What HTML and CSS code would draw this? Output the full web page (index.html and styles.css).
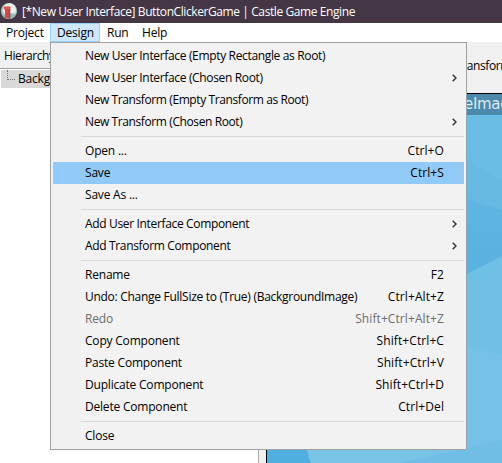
FILE: index.html
```html
<!DOCTYPE html>
<html lang="en">
<head>
<meta charset="utf-8">
<title>Castle Game Engine</title>
<link rel="stylesheet" href="styles.css">
</head>
<body>
<div class="window">
  <header class="titlebar">
    <svg class="logo" viewBox="0 0 16 16">
      <circle cx="8" cy="8" r="8" fill="#9fcfc8"/>
      <circle cx="8.500" cy="6.800" r="6.500" fill="#e6f2ea"/>
      <path d="M1 12Q8 9 15 11Q12 16 8 16Q3 16 1 12Z" fill="#8dbfb4"/>
      <path d="M4 6h5v9.700L4 15z" fill="#d9434d"/>
      <path d="M2.500 4l2-.8 1 .6 1.500-.8 1.300.7 1.200-.4v3.200H3z" fill="#e4544f"/>
      <path d="M8 6h1.300v9.500H8z" fill="#b9364a"/>
    </svg>
    <span class="title">[*New User Interface] ButtonClickerGame | Castle Game Engine</span>
  </header>
  <nav class="menubar">
    <span class="tab project">Project</span><span class="tab design">Design</span><span class="tab run">Run</span><span class="tab help">Help</span>
  </nav>
  <main class="workspace">
    <aside class="hierarchy">
      <div class="heading">Hierarchy</div>
      <div class="tree"><div class="node"><i class="branch"></i><span>Background</span></div></div>
    </aside>
    <div class="splitter"></div>
    <section class="editor">
      <div class="toolbar"><span>Transform</span></div>
      <div class="viewport">
        <svg class="scene" viewBox="267 94 235 369" preserveAspectRatio="none">
          <defs>
            <linearGradient id="sky" x1="0" y1="0" x2="0" y2="1"><stop offset="0" stop-color="#67bbe4"/><stop offset=".45" stop-color="#59b2df"/><stop offset="1" stop-color="#4fafde"/></linearGradient>
          </defs>
          <path d="M267 94H502V463H267z" fill="url(#sky)"/>
          <path d="M467 94H502V180Q482 172 467 159z" fill="#6abde4"/>
          <path d="M467 159Q482 172 502 180V210Q484 206 467 199z" fill="#66b9e2"/>
          <path d="M502 256L467 274V463H502z" fill="#70c0e6"/>
          <path d="M467 346L502 355V463H467z" fill="#75c1e7"/>
          <path d="M307 449Q308 457 311 463H502V449z" fill="#79c3e7"/>
          <path d="M400 463L502 440V463z" fill="#70bee5"/>
        </svg>
        <div class="caption">eImage</div>
      </div>
    </section>
  </main>
  <div class="menu">
    <div class="item tight"><span>New User Interface (Empty Rectangle as Root)</span></div>
    <div class="item tight"><span>New User Interface (Chosen Root)</span><svg class="arrow" viewBox="0 0 5 8"><path d="M.7.7L4 4 .7 7.300"/></svg></div>
    <div class="item tighter"><span>New Transform (Empty Transform as Root)</span></div>
    <div class="item tighter"><span>New Transform (Chosen Root)</span><svg class="arrow" viewBox="0 0 5 8"><path d="M.7.7L4 4 .7 7.300"/></svg></div>
    <div class="separator"></div>
    <div class="item"><span>Open ...</span><kbd>Ctrl+O</kbd></div>
    <div class="item selected"><span>Save</span><kbd>Ctrl+S</kbd></div>
    <div class="item"><span>Save As ...</span></div>
    <div class="separator"></div>
    <div class="item tight"><span>Add User Interface Component</span><svg class="arrow" viewBox="0 0 5 8"><path d="M.7.7L4 4 .7 7.300"/></svg></div>
    <div class="item tight"><span>Add Transform Component</span><svg class="arrow" viewBox="0 0 5 8"><path d="M.7.7L4 4 .7 7.300"/></svg></div>
    <div class="separator"></div>
    <div class="item"><span>Rename</span><kbd>F2</kbd></div>
    <div class="item undo"><span>Undo: Change FullSize to (True) (BackgroundImage)</span><kbd>Ctrl+Alt+Z</kbd></div>
    <div class="item disabled"><span>Redo</span><kbd>Shift+Ctrl+Alt+Z</kbd></div>
    <div class="item"><span>Copy Component</span><kbd>Shift+Ctrl+C</kbd></div>
    <div class="item"><span>Paste Component</span><kbd>Shift+Ctrl+V</kbd></div>
    <div class="item"><span>Duplicate Component</span><kbd>Shift+Ctrl+D</kbd></div>
    <div class="item"><span>Delete Component</span><kbd>Ctrl+Del</kbd></div>
    <div class="separator"></div>
    <div class="item"><span>Close</span></div>
  </div>
</div>
</body>
</html>
```
FILE: styles.css
```css
* { box-sizing: border-box; }
body { margin: 0; font: 12px/16px "Open Sans", "Noto Sans", sans-serif; color: #000; letter-spacing: -0.2px; }
.window { position: relative; width: 502px; height: 463px; overflow: hidden; display: flex; flex-direction: column; background: #fff; white-space: nowrap; }
.titlebar { height: 23px; flex: none; display: flex; align-items: center; background: #443645; color: #fff; padding-left: 1px; }
.title { letter-spacing: -0.41px; padding-top: 1px; }
.logo { width: 16px; height: 16px; margin: 0 5px 1px 0; }
.menubar { height: 19px; flex: none; display: flex; background: #fff; }
.tab { line-height: 19px; padding-left: 6px; }
.project { width: 50px; }
.design { width: 50px; background: #cce8ff; border: 1px solid #99d1ff; line-height: 17px; }
.run { width: 35px; padding-left: 7px; }
.help { padding-left: 7px; }
.workspace { flex: 1; display: flex; min-height: 0; }
.hierarchy { width: 259px; flex: none; border-right: 1px solid #acacac; background: #fff; }
.heading { height: 27px; background: #f0f0f0; border-bottom: 1px solid #a0a0a0; padding: 6px 0 0 4px; letter-spacing: -0.4px; }
.tree { padding: 1px 0 0 1px; }
.node { display: flex; height: 18px; background: #d9d9d9; line-height: 18px; }
.branch { width: 8px; height: 10px; margin: 0 3px 0 6px; border-left: 1px dotted #777; border-bottom: 1px dotted #777; }
.splitter { width: 7px; flex: none; background: #f0f0f0; }
.editor { flex: 1; min-width: 0; display: flex; flex-direction: column; }
.toolbar { height: 51px; flex: none; background: #f0f0f0; padding: 16px 0 0 190px; letter-spacing: -0.4px; }
.viewport { position: relative; flex: 1; min-height: 0; border: solid #000; border-width: 1px 0 0 1px; overflow: hidden; }
.scene { display: block; width: 235px; height: 369px; }
.caption { position: absolute; top: 0; left: 0; right: 0; height: 21px; background: #4c8aac; color: #dce9ef; font: 15px/20px "DejaVu Sans", sans-serif; padding-left: 197px; letter-spacing: -0.3px; }
.menu { position: absolute; left: 50px; top: 42px; width: 417px; height: 408px; padding: 2px; border: 1px solid #a0a0a0; background: linear-gradient(90deg, #f0f0f0 30px, #f2f2f2 30px); }
.item { height: 22px; display: flex; align-items: center; justify-content: space-between; padding: 0 20px 0 32px; }
.tight { letter-spacing: -0.34px; }
.tighter { letter-spacing: -0.4px; }
.undo { letter-spacing: -0.28px; }
.separator { height: 7px; padding: 3px 0; margin-left: 28px; background: #d7d7d7 content-box; }
.selected { background: #91c9f7; }
.disabled { color: #6d6d6d; }
kbd { font: inherit; letter-spacing: 0.09px; }
.arrow { width: 5px; height: 8px; margin-right: -13px; fill: none; stroke: #333; stroke-width: 1.4; }
```
